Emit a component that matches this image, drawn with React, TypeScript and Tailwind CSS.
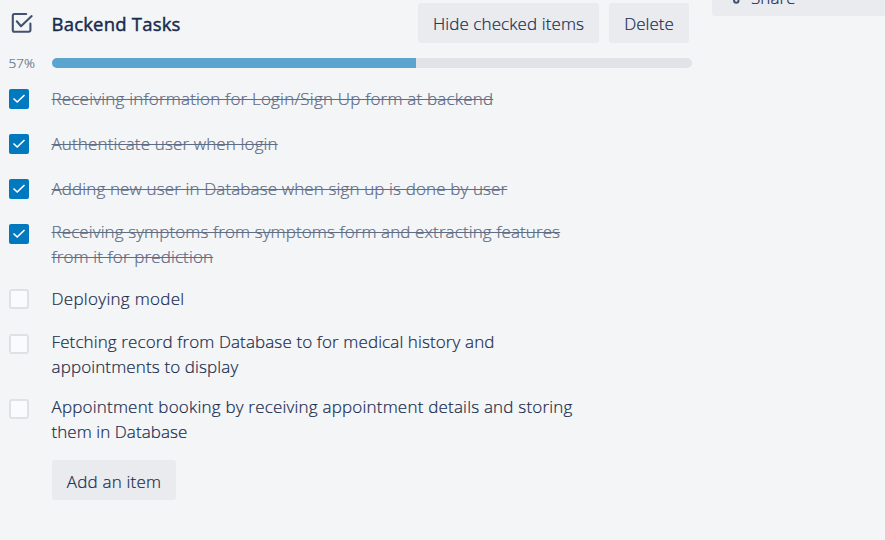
type Item = { lines: { text: string; spacing: string }[]; checked: boolean; row: string };

const items: Item[] = [
  { checked: true, row: 'h-[45px]', lines: [{ text: 'Receiving information for Login/Sign Up form at backend', spacing: 'tracking-[0.2px]' }] },
  { checked: true, row: 'h-[45px]', lines: [{ text: 'Authenticate user when login', spacing: 'tracking-[0.14px]' }] },
  { checked: true, row: 'h-[45px]', lines: [{ text: 'Adding new user in Database when sign up is done by user', spacing: 'tracking-[0.125px]' }] },
  {
    checked: true,
    row: 'h-[65px]',
    lines: [
      { text: 'Receiving symptoms from symptoms form and extracting features', spacing: 'tracking-[0.105px]' },
      { text: 'from it for prediction', spacing: 'tracking-[0.13px]' },
    ],
  },
  { checked: false, row: 'h-[45px]', lines: [{ text: 'Deploying model', spacing: 'tracking-[0.3px]' }] },
  {
    checked: false,
    row: 'h-[65px]',
    lines: [
      { text: 'Fetching record from Database to for medical history and', spacing: 'tracking-[0.11px]' },
      { text: 'appointments to display', spacing: 'tracking-[0.13px]' },
    ],
  },
  {
    checked: false,
    row: 'h-[61px]',
    lines: [
      { text: 'Appointment booking by receiving appointment details and storing', spacing: 'tracking-[0.2px]' },
      { text: 'them in Database', spacing: 'tracking-[0.06px]' },
    ],
  },
];

function Checkbox({ checked }: { checked: boolean }) {
  if (!checked) {
    return <span className="block size-5 shrink-0 rounded-[3px] border-2 border-[#dfe1e6] bg-[#fafbfc]" />;
  }
  return (
    <span className="block size-5 shrink-0 rounded-[2px] bg-[#0079bf]">
      <svg viewBox="0 0 20 20" className="size-5" fill="none" stroke="#fff" strokeWidth="1.7" strokeLinecap="round" strokeLinejoin="round">
        <path d="M5 10 8.2 13 15 6.5" />
      </svg>
    </span>
  );
}

export default function App() {
  return (
    <div className="flex h-[540px] w-[885px] overflow-hidden bg-[#f4f5f7] font-['Open_Sans',sans-serif] text-[17px] leading-[25px] font-light text-[#172b4d] [-webkit-text-stroke:0.2px]">
      <main className="w-[692px] shrink-0">
        <header className="flex h-[58px] items-start pt-[3px]">
          <svg viewBox="0 0 24 24" className="mt-[8px] ml-[10px] size-6" fill="none" stroke="#42526e" strokeWidth="2.1" strokeLinecap="round" strokeLinejoin="round">
            <path d="M16.2 3H4.3A1.5 1.5 0 0 0 2.8 4.5V19.3A1.5 1.5 0 0 0 4.3 20.8H18.9A1.5 1.5 0 0 0 20.4 19.3V12.6" />
            <path d="M6.8 10.3 11 15.2 21.7 5.1" />
          </svg>
          <h3 className="mt-[8px] ml-[17.5px] text-[18.5px] font-normal tracking-[0.2px] [-webkit-text-stroke:0.45px]">Backend Tasks</h3>
          <button className="ml-auto h-10 w-[181px] rounded-[3px] bg-[#eaebef] pt-px tracking-[0.1px] whitespace-nowrap">Hide checked items</button>
          <button className="mr-[3px] ml-[10px] h-10 w-20 rounded-[3px] bg-[#eaebef] pt-px">Delete</button>
        </header>
        <div className="flex h-[10px] items-center">
          <span className="w-[52px] pl-[8.5px] text-[13.5px] leading-[18px] text-[#5e6c84]">57%</span>
          <div className="h-[10px] w-[640px] overflow-hidden rounded-full bg-[#e2e3e9]">
            <div className="h-full w-[364px] bg-[#5ba4cf]" />
          </div>
        </div>
        <ul className="pt-[21px]">
          {items.map((item) => (
            <li key={item.lines[0].text} className={`flex pl-[9px] ${item.row}`}>
              <Checkbox checked={item.checked} />
              <div className={`ml-[22.5px] ${item.lines.length > 1 ? '-mt-[5px]' : '-mt-[3px]'} ${item.checked ? 'text-[#5e6c84]' : ''}`}>
                {item.lines.map((line) => (
                  <div key={line.text} className="whitespace-nowrap">
                    <span className={`${line.spacing} ${item.checked ? 'line-through decoration-1' : ''}`}>{line.text}</span>
                  </div>
                ))}
              </div>
            </li>
          ))}
        </ul>
        <button className="ml-[52px] h-10 w-[124px] rounded-[3px] bg-[#eaebef] pt-[2px] tracking-[0.2px]">Add an item</button>
      </main>
      <aside className="ml-5 grow">
        <button className="-mt-6 flex h-10 w-[210px] items-center rounded-[3px] bg-[#eaebef] pl-[15px]">
          <svg viewBox="0 0 20 20" className="size-5" fill="none" stroke="#42526e" strokeWidth="2">
            <circle cx="4.5" cy="9.5" r="2.2" />
            <circle cx="14.5" cy="4.5" r="2.2" />
            <circle cx="9.3" cy="14.6" r="2.2" />
            <path d="M6.5 8.7 12.5 5.6M4.8 12 7.5 14" />
          </svg>
          <span className="ml-1 pt-[2px] tracking-[0.1px]">Share</span>
        </button>
      </aside>
    </div>
  );
}
